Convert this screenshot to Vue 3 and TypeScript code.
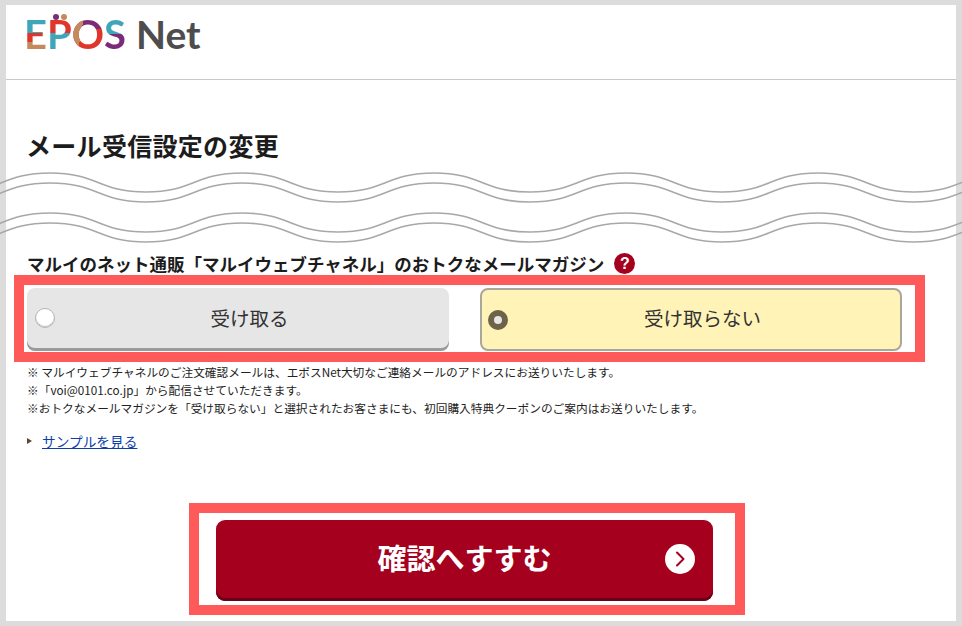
<template>
  <div class="frame">
    <div class="sheet">
      <header class="site-header">
        <div class="logo">
          <span class="logo-mark">
            <span class="dot dot-purple"></span>
            <span class="dot dot-tan"></span>
            <span class="ltr ltr-e">E</span><span class="ltr ltr-p">P</span><span class="ltr ltr-o">O</span><span class="ltr ltr-s">S</span>
          </span>
          <span class="logo-net">Net</span>
        </div>
      </header>

      <main class="content">
        <h1 class="title">メール受信設定の変更</h1>

        <svg class="waves" width="962" height="80" viewBox="0 0 962 80" fill="none">
          <path v-for="y in waveRows" :key="y" :d="wavePath(y)" stroke="#a8a8a8" stroke-width="1.6" />
        </svg>

        <h2 class="subtitle">
          マルイのネット通販「マルイウェブチャネル」のおトクなメールマガジン
          <span class="help">?</span>
        </h2>

        <div class="highlight options">
          <div
            v-for="opt in options"
            :key="opt.label"
            class="option"
            :class="{ selected: opt.selected }"
          >
            <span class="radio"></span>
            <span class="option-label">{{ opt.label }}</span>
          </div>
        </div>

        <ul class="notes">
          <li v-for="note in notes" :key="note">{{ note }}</li>
        </ul>

        <p class="sample">
          <span class="arrow"></span>
          <a href="#" class="sample-link">サンプルを見る</a>
        </p>

        <div class="submit-row">
          <div class="highlight submit-box">
            <button type="button" class="submit">
              確認へすすむ
              <span class="submit-icon">
                <svg class="submit-svg" width="30" height="30" viewBox="0 0 30 30" fill="none">
                  <circle cx="15" cy="15" r="15" fill="#fff" />
                  <path d="M12 8.5l6.5 6.5-6.5 6.5" stroke="#a5001e" stroke-width="2" stroke-linecap="round" stroke-linejoin="round" />
                </svg>
              </span>
            </button>
          </div>
        </div>
      </main>
    </div>
  </div>
</template>

<script setup lang="ts">
const waveRows = [5, 15, 45, 55]
const wavePeriod = 192

const options = [
  { label: '受け取る', selected: false },
  { label: '受け取らない', selected: true },
]

const notes = [
  '※ マルイウェブチャネルのご注文確認メールは、エポスNet大切なご連絡メールのアドレスにお送りいたします。',
  '※「voi@0101.co.jp」から配信させていただきます。',
  '※おトクなメールマガジンを「受け取らない」と選択されたお客さまにも、初回購入特典クーポンのご案内はお送りいたします。',
]

// 波線: サイン波をベジェで繋ぐ
function wavePath(y: number): string {
  const half = wavePeriod / 2
  let d = `M-46 ${y + 19}`
  for (let x = -46; x < 962; x += wavePeriod) {
    d += ` C${x + half / 2} ${y + 19} ${x + half / 2} ${y} ${x + half} ${y}`
    d += ` C${x + half * 1.5} ${y} ${x + half * 1.5} ${y + 19} ${x + wavePeriod} ${y + 19}`
  }
  return d
}
</script>

<style>
html,
body {
  margin: 0;
  overflow: hidden;
}
</style>

<style scoped>
.frame {
  box-sizing: border-box;
  width: 962px;
  height: 626px;
  padding: 5px 6px;
  background: #dcdcdc;
  font-family: "Noto Sans CJK JP", "Liberation Sans", sans-serif;
  color: #222;
}

.sheet {
  height: 100%;
  background: #fff;
}

.site-header {
  box-sizing: border-box;
  height: 75px;
  padding: 7px 0 0 18px;
  border-bottom: 1px solid #c8c8c8;
}

.logo {
  display: flex;
  align-items: baseline;
  gap: 10px;
  font-family: Lato, sans-serif;
  font-size: 40px;
  line-height: 44px;
}

.logo-mark {
  position: relative;
  display: inline-flex;
  font-weight: 700;
}

.dot {
  position: absolute;
  top: 2px;
  width: 6px;
  height: 6px;
  border-radius: 50%;
}

.dot-purple {
  left: 29px;
  background: #7a2a78;
}

.dot-tan {
  left: 37px;
  background: #c48a5e;
}

.ltr {
  color: transparent;
  -webkit-background-clip: text;
  background-clip: text;
}

.ltr-e {
  background-image: linear-gradient(#3fa5b8 0 47%, #e0352b 47% 68%, #c48a5e 68%);
}

.ltr-p {
  background-image: linear-gradient(#e0352b 0 48%, #3fa5b8 48%);
}

.ltr-o {
  background-image: linear-gradient(100deg, #c48a5e 0 32%, transparent 32%),
    linear-gradient(#7a2a78 0 38%, #e0352b 38%);
}

.ltr-s {
  background-image: linear-gradient(#3fa5b8 0 50%, #7a2a78 50%);
}

.logo-net {
  font-size: 39px;
  font-weight: 700;
  color: #4d4d4d;
}

.content {
  padding-top: 47px;
}

.title {
  margin: 0 0 0 20px;
  font-size: 25px;
  letter-spacing: 0.3px;
  line-height: 36px;
  font-weight: 700;
  color: #1c1c1c;
}

.waves {
  display: block;
  margin: 5px 0 0 -6px;
}

.subtitle {
  display: flex;
  align-items: center;
  gap: 10px;
  margin: 4px 0 0 21px;
  font-size: 17.5px;
  line-height: 23px;
  font-weight: 700;
  color: #1c1c1c;
}

.help {
  width: 21px;
  height: 21px;
  border-radius: 50%;
  background: #a5001e;
  color: #fff;
  font-family: "Liberation Sans", sans-serif;
  font-size: 16px;
  font-weight: 700;
  line-height: 21px;
  text-align: center;
}

.highlight {
  box-sizing: border-box;
  border: 10px solid #ff5a5a;
  background: #fff;
}

.options {
  display: flex;
  justify-content: space-between;
  width: 911px;
  height: 87px;
  margin: 0 0 0 8px;
  padding: 3px 13px 0 3px;
}

.option {
  position: relative;
  box-sizing: border-box;
  display: flex;
  align-items: center;
  justify-content: center;
  width: 422px;
  height: 63px;
  padding: 0 0 5px 23px;
  border-radius: 8px;
  background: #e6e6e6;
  box-shadow: inset 0 -3px 0 #9a9a9a;
  font-size: 19.5px;
  color: #333;
}

.option.selected {
  background: #fff3b8;
  border: 2px solid #aaa69a;
  box-shadow: none;
}

.radio {
  position: absolute;
  left: 8px;
  top: 50%;
  box-sizing: border-box;
  width: 20px;
  height: 20px;
  margin-top: -12px;
  border-radius: 50%;
  background: #fff;
  border: 1px solid #b4b4b4;
  box-shadow: inset 0 -1px 0 #c4c4c4;
}

.selected .radio {
  left: 6px;
  margin-top: -10px;
  background: #e6e6e6;
  border: 6px solid #6e6249;
  box-shadow: none;
}

.notes {
  margin: 1px 0 0 21px;
  padding: 0;
  list-style: none;
  font-size: 11.7px;
  line-height: 18px;
  color: #222;
}

.sample {
  display: flex;
  align-items: center;
  margin: 14px 0 0 21px;
  font-size: 13.7px;
  line-height: 20px;
}

.arrow {
  width: 0;
  height: 0;
  margin-right: 10px;
  border-left: 5px solid #554a30;
  border-top: 3px solid transparent;
  border-bottom: 3px solid transparent;
}

.sample-link {
  color: #0b3ea8;
  text-decoration: underline;
}

.submit-row {
  display: flex;
  padding-left: 183px;
  margin-top: 52px;
}

.submit-box {
  display: flex;
  width: 556px;
  height: 112px;
  padding: 7px 0 0 17px;
}

.submit {
  position: relative;
  box-sizing: border-box;
  width: 497px;
  height: 81px;
  border: 0;
  border-radius: 9px;
  background: #a5001e;
  box-shadow: inset 0 -3px 0 #6a0018;
  color: #fff;
  font-family: inherit;
  font-size: 29px;
  font-weight: 700;
  padding: 0 0 7px;
}

.submit-icon {
  position: absolute;
  right: 18px;
  top: 24px;
  height: 30px;
}

.submit-svg {
  display: block;
}
</style>
